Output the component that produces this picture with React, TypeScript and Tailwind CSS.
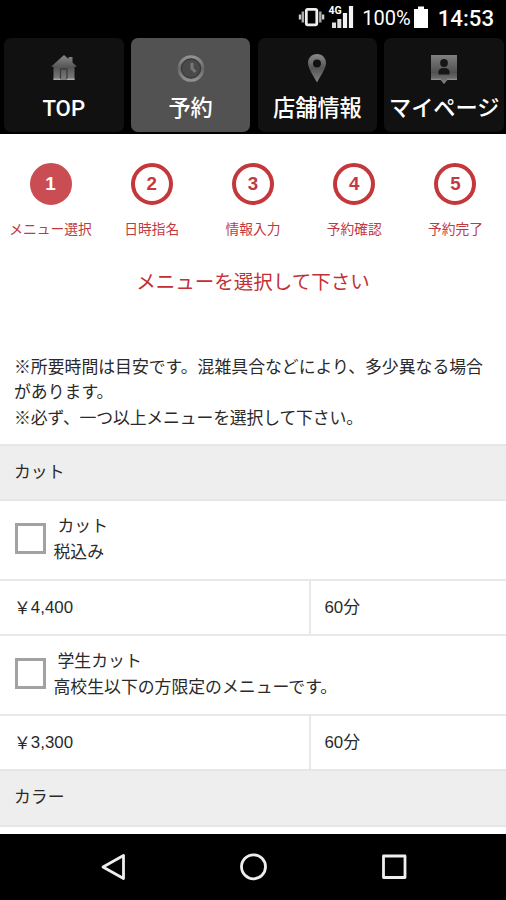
import type { ReactNode } from "react";

const HomeIcon = () => (
  <svg width="28" height="28" viewBox="0 0 28 28">
    <defs>
      <linearGradient id="homeFill" x1="0" y1="0" x2="0" y2="1">
        <stop offset="0" stopColor="#888" />
        <stop offset="0.5" stopColor="#555" />
        <stop offset="1" stopColor="#808080" />
      </linearGradient>
    </defs>
    <path d="M14 1 L18.5 5 V3 H22.5 V8.5 L27 12.8 H24.5 V26 H3.5 V12.8 H1 Z" fill="url(#homeFill)" />
    <path d="M10.5 25 V15 H17 V25" fill="none" stroke="#3c3c3c" strokeWidth="1.3" />
    <path d="M3.5 25.3 H10.5 M17 25.3 H24.5" stroke="#aaa" strokeWidth="1.5" />
  </svg>
);

const ClockIcon = () => (
  <svg width="28" height="28" viewBox="0 0 28 28">
    <defs>
      <linearGradient id="clockRing" x1="0" y1="0" x2="0" y2="1">
        <stop offset="0" stopColor="#929292" />
        <stop offset="0.5" stopColor="#686868" />
        <stop offset="1" stopColor="#909090" />
      </linearGradient>
    </defs>
    <circle cx="14" cy="14.500" r="11.800" fill="#4a4a4a" stroke="url(#clockRing)" strokeWidth="3" />
    <circle cx="14" cy="14.500" r="9.500" fill="none" stroke="#353535" strokeWidth="1" />
    <path d="M15 9 V14.500 L18.500 18" fill="none" stroke="#777" strokeWidth="3" />
  </svg>
);

const PinIcon = () => (
  <svg width="28" height="29" viewBox="0 0 28 29">
    <defs>
      <linearGradient id="pinFill" x1="0" y1="0" x2="0" y2="1">
        <stop offset="0" stopColor="#8a8a8a" />
        <stop offset="0.5" stopColor="#555" />
        <stop offset="1" stopColor="#858585" />
      </linearGradient>
    </defs>
    <path
      fillRule="evenodd"
      d="M14 0 C8.500 0 5 4 5 9 C5 14.500 10 21 14 28.500 C18 21 23 14.500 23 9 C23 4 19.500 0 14 0 Z M14 5.500 A4 4 0 1 1 14 13.500 A4 4 0 1 1 14 5.500 Z"
      fill="url(#pinFill)"
    />
  </svg>
);

const PersonIcon = () => (
  <svg width="28" height="30" viewBox="0 0 28 30">
    <defs>
      <linearGradient id="personFill" x1="0" y1="0" x2="0" y2="1">
        <stop offset="0" stopColor="#808080" />
        <stop offset="0.6" stopColor="#505050" />
        <stop offset="1" stopColor="#858585" />
      </linearGradient>
    </defs>
    <path d="M1 1 H27 V26 H17.500 L14 30 L10.500 26 H1 Z" fill="url(#personFill)" />
    <circle cx="14" cy="9" r="3.900" fill="#161616" />
    <path d="M8.500 20.500 V18 C8.500 15.500 10.500 14 14 14 S19.500 15.500 19.500 18 V20.500 Z" fill="#161616" />
    <path d="M1 25.400 H11 M17 25.400 H27" stroke="#8d8d8d" strokeWidth="1.200" />
  </svg>
);

const Tab = ({ label, icon, active }: { label: string; icon: ReactNode; active?: boolean }) => (
  <div
    className={`flex h-[93.500px] w-[119.500px] flex-col items-center rounded-[7px] pt-4 ${active ? "bg-[#525252]" : "bg-[#111]"}`}
  >
    <div className="h-[30px]">{icon}</div>
    <div className="mt-[9px] text-[22.200px] leading-[30px] font-medium whitespace-nowrap text-white">{label}</div>
  </div>
);

const StatusBar = () => (
  <div className="flex h-[38px] items-start justify-end pr-3 text-white">
    <svg width="56" height="32" viewBox="0 0 56 32" className="mr-[8px]">
      <rect x="8.300" y="9.300" width="10.500" height="15.500" rx="1.500" fill="none" stroke="#eee" strokeWidth="2.800" />
      <path d="M4.800 11.500 V22.500 M22.300 11.500 V22.500" stroke="#aaa" strokeWidth="2.400" />
      <path d="M2 14.500 V19.500 M25.100 14.500 V19.500" stroke="#ccc" strokeWidth="2.400" />
      <path d="M36 22.500 V28 M41.300 19 V28" stroke="#ddd" strokeWidth="4" />
      <path d="M47 13 V28 M53 6 V28" stroke="#f2f2f2" strokeWidth="4.200" />
      <text x="30.500" y="14" fontSize="10.500" fontWeight="700" fill="#fff" stroke="#000" strokeWidth="1.500" paintOrder="stroke">
        4G
      </text>
    </svg>
    <span className="mt-[5px] text-[20px] leading-[26px]">100%</span>
    <svg width="16" height="32" viewBox="0 0 16 32" className="ml-[2px]">
      <path d="M5 6.500 H11 V9 H15 V28 H1 V9 H5 Z" fill="#fff" />
    </svg>
    <span className="ml-[9px] mt-[5px] text-[22.200px] leading-[26px] font-medium">14:53</span>
  </div>
);

const steps = ["メニュー選択", "日時指名", "情報入力", "予約確認", "予約完了"];

const Section = ({ title }: { title: string }) => (
  <div className="-mt-[2px] flex h-[57.500px] items-center border-y-[2.500px] border-[#e6e6e6] bg-[#eee] pl-3.5">
    {title}
  </div>
);

const MenuItem = ({ name, note, price, time }: { name: string; note: string; price: string; time: string }) => (
  <>
    <div className="flex h-[79.500px] items-center border-b-2 border-[#e8e8e8] pl-[15px]">
      <div className="mb-[3px] size-[31px] shrink-0 border-[3px] border-[#a2a2a2]" />
      <div className="ml-[7.500px] leading-[25.300px]">
        <div className="pl-1">{name}</div>
        <div>{note}</div>
      </div>
    </div>
    <div className="flex h-[55.500px] border-b-2 border-[#e8e8e8]">
      <div className="flex w-[311px] items-center border-r-2 border-[#e8e8e8] pt-px pl-3.5">
        <span className="font-['Noto_Sans_CJK_JP',sans-serif] leading-none">{"\uFFE5"}</span>
        {price}
      </div>
      <div className="flex items-center pt-px pl-[13.500px]">{time}</div>
    </div>
  </>
);

export default function App() {
  return (
    <div className="flex h-[900px] w-[506px] flex-col overflow-hidden bg-white font-['Liberation_Sans','Noto_Sans_CJK_JP',sans-serif] text-[16.850px] text-[#2a2a2a]">
      <header className="h-[134px] shrink-0 bg-black font-['Roboto','Noto_Sans_CJK_JP',sans-serif]">
        <StatusBar />
        <nav className="flex justify-between pr-[2px] pl-1">
          <Tab label="TOP" icon={<HomeIcon />} />
          <Tab label="予約" icon={<ClockIcon />} active />
          <Tab label="店舗情報" icon={<PinIcon />} />
          <Tab label="マイページ" icon={<PersonIcon />} />
        </nav>
      </header>
      <main className="h-[700px] shrink-0 overflow-hidden">
        <div className="grid grid-cols-5 pt-[29px] text-[#c23a3f]">
          {steps.map((label, i) => (
            <div key={label} className="flex flex-col items-center">
              <div
                className={`flex size-[42px] items-center justify-center rounded-full border-4 text-[18.800px] font-bold ${
                  i === 0 ? "border-[#c94d52] bg-[#c94d52] text-white" : "border-[#c4373b]"
                }`}
              >
                {i + 1}
              </div>
              <div className="mt-[15px] text-[13.750px] leading-5 whitespace-nowrap">{label}</div>
            </div>
          ))}
        </div>
        <h1 className="mt-[29px] text-center text-[19.500px] leading-[26px] text-[#c23035]">メニューを選択して下さい</h1>
        <p className="mt-[60px] h-[90.500px] pl-3.5 leading-[25.300px] whitespace-nowrap">
          ※所要時間は目安です。混雑具合などにより、多少異なる場合
          <br />
          があります。
          <br />
          <span className="tracking-[-0.15px]">※必ず、一つ以上メニューを選択して下さい。</span>
        </p>
        <Section title="カット" />
        <MenuItem name="カット" note="税込み" price="4,400" time="60分" />
        <MenuItem name="学生カット" note="高校生以下の方限定のメニューです。" price="3,300" time="60分" />
        <Section title="カラー" />
      </main>
      <footer className="flex h-[66px] shrink-0 bg-black">
        <svg width="506" height="66" viewBox="0 0 506 66" fill="none" stroke="#eee" strokeWidth="2.800" strokeLinejoin="round">
          <path d="M123.500 21.500 V44.500 L103 33 Z" />
          <circle cx="253.500" cy="32.800" r="12" />
          <rect x="383.500" y="22" width="21.500" height="21.500" />
        </svg>
      </footer>
    </div>
  );
}
